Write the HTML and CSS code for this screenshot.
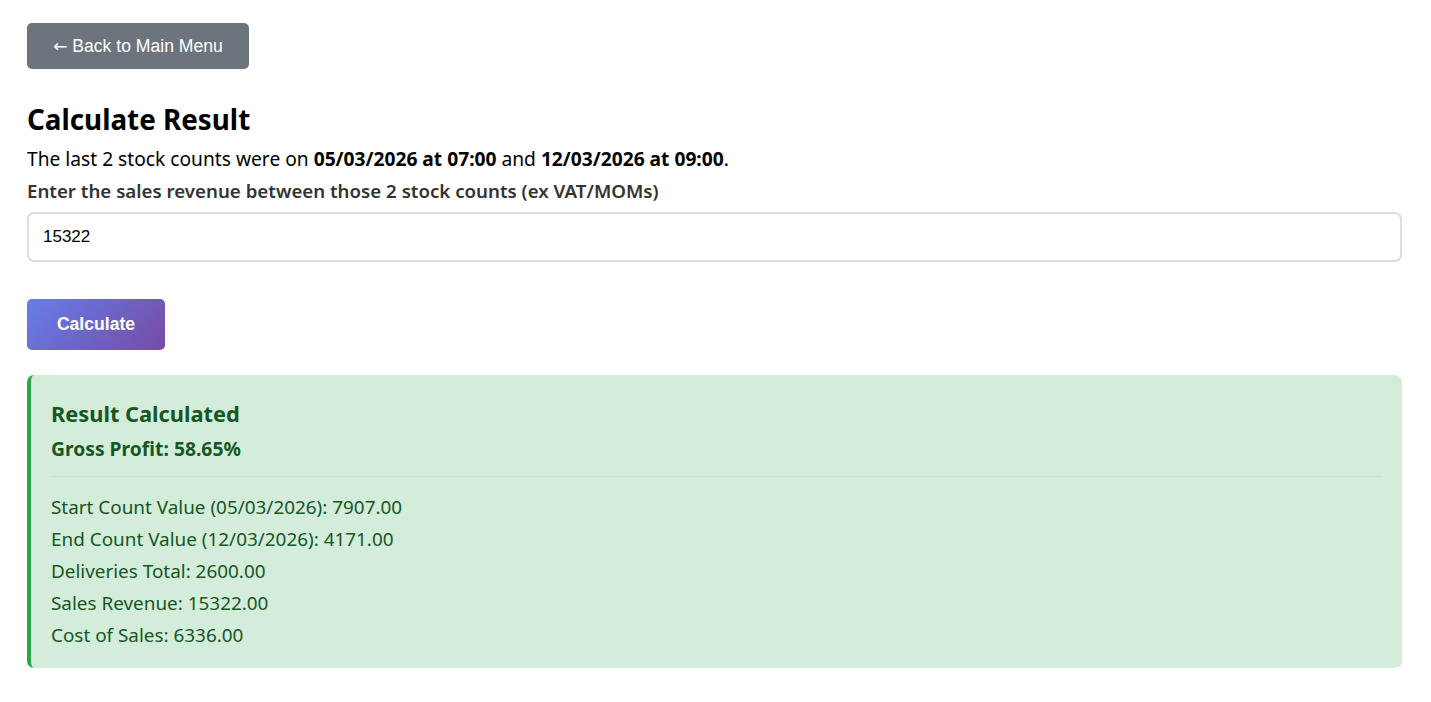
FILE: index.html
```html
<!DOCTYPE html>
<html lang="en">
<head>
<meta charset="utf-8">
<title>Calculate Result</title>
<link rel="stylesheet" href="styles.css">
</head>
<body>
<div class="page">
  <button class="back-btn"><span class="arrow">←</span> Back to Main Menu</button>
  <h2 class="title">Calculate Result</h2>
  <p class="intro">The last 2 stock counts were on <strong>05/03/2026 at 07:00</strong> and <strong>12/03/2026 at 09:00</strong>.</p>
  <label class="field-label" for="rev">Enter the sales revenue between those 2 stock counts (ex VAT/MOMs)</label>
  <input class="field-input" id="rev" type="text" value="15322">
  <button class="calc-btn">Calculate</button>
  <div class="result">
    <h3 class="result-title">Result Calculated</h3>
    <p class="result-gp">Gross Profit: 58.65%</p>
    <hr class="result-rule">
    <p class="result-line">Start Count Value (05/03/2026): 7907.00</p>
    <p class="result-line">End Count Value (12/03/2026): 4171.00</p>
    <p class="result-line">Deliveries Total: 2600.00</p>
    <p class="result-line">Sales Revenue: 15322.00</p>
    <p class="result-line">Cost of Sales: 6336.00</p>
  </div>
</div>
</body>
</html>
```
FILE: styles.css
```css
* { box-sizing: border-box; }
html, body { margin: 0; padding: 0; background: #fff; }
body {
  font-family: "Noto Sans", "Open Sans", sans-serif;
  color: #000;
}
.page {
  display: flex;
  flex-direction: column;
  align-items: flex-start;
  padding: 23px 29px 30px 27px;
}
.back-btn {
  font-family: "Liberation Sans", Arial, sans-serif;
  font-size: 17.6px;
  color: #fff;
  background: #6c757d;
  border: none;
  border-radius: 5px;
  height: 46px;
  width: 222px;
  padding: 0;
  cursor: pointer;
}
.arrow {
  font-family: "DejaVu Sans", sans-serif;
  font-size: 17px;
}
.title {
  margin: 32px 0 0;
  font-size: 27.8px;
  font-weight: 700;
  line-height: 36px;
}
.intro {
  margin: 8px 0 0;
  font-size: 19.2px;
  line-height: 28px;
}
.intro strong { font-weight: 700; }
.field-label {
  margin-top: 4px;
  font-size: 18.7px;
  font-weight: 600;
  line-height: 28px;
  color: #333;
}
.field-input {
  margin-top: 7px;
  width: 100%;
  height: 50px;
  border: 2px solid #ddd;
  border-radius: 7px;
  padding: 0 14px;
  font-family: "Liberation Sans", Arial, sans-serif;
  font-size: 17px;
  color: #000;
  background: #fff;
  outline: none;
}
.calc-btn {
  margin-top: 37px;
  width: 138px;
  height: 51px;
  border: none;
  border-radius: 5px;
  background: linear-gradient(135deg, #667eea 0%, #764ba2 100%);
  color: #fff;
  font-family: "Liberation Sans", Arial, sans-serif;
  font-size: 17.6px;
  font-weight: 700;
  padding: 0;
  cursor: pointer;
}
.result {
  margin-top: 25px;
  width: 100%;
  background: #d4edda;
  border-left: 4px solid #28a745;
  border-radius: 7px;
  padding: 24px 20px 17px 20px;
  color: #155724;
}
.result-title {
  margin: 0;
  font-size: 21.8px;
  font-weight: 700;
  line-height: 30px;
}
.result-gp {
  margin: 7px 0 0;
  font-size: 19.3px;
  font-weight: 700;
  line-height: 26px;
}
.result-rule {
  margin: 14px 0 14px;
  border: none;
  border-top: 1px solid #c3e6cb;
  height: 0;
}
.result-line {
  margin: 0;
  font-size: 18.9px;
  line-height: 32px;
}
```
